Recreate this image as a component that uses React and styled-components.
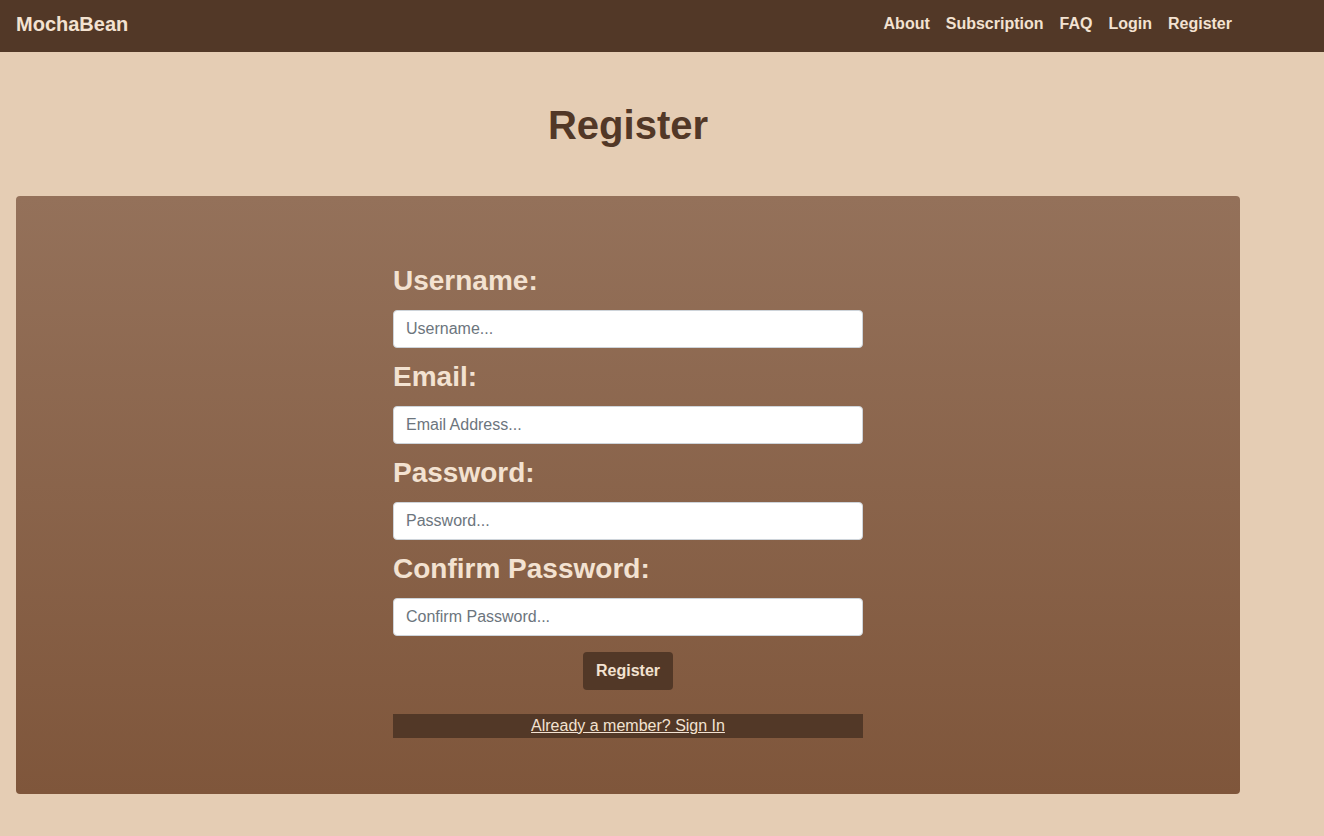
import React from "react";
import styled, { createGlobalStyle } from "styled-components";

const Global = createGlobalStyle`
  html, body { margin: 0; padding: 0; }
  body {
    background: #e5cdb4;
    font-family: "Liberation Sans", Arial, sans-serif;
    min-height: 836px;
  }
  * { box-sizing: border-box; }
`;

const Nav = styled.nav`
  height: 52px;
  background: #523827;
  display: flex;
  align-items: center;
  justify-content: space-between;
  padding: 0 92px 4px 16px;
`;

const Brand = styled.a`
  color: #f3e2d1;
  font-size: 20px;
  font-weight: 700;
  text-decoration: none;
`;

const Links = styled.div`
  display: flex;
  gap: 16px;
`;

const NavLink = styled.a`
  color: #f3e2d1;
  font-size: 16px;
  font-weight: 700;
  text-decoration: none;
`;

const Main = styled.main`
  width: 1224px;
  margin-left: 16px;
`;

const Title = styled.h1`
  margin: 50px 0 48px;
  text-align: center;
  color: #523827;
  font-size: 40px;
  line-height: 46px;
  font-weight: 700;
`;

const Panel = styled.section`
  background: linear-gradient(to bottom, #94715a, #7f563b);
  border-radius: 4px;
  padding: 56px 0;
  display: flex;
  justify-content: center;
`;

const Form = styled.form`
  width: 470px;
  display: flex;
  flex-direction: column;
`;

const Label = styled.label`
  color: #f3e2d1;
  font-size: 28px;
  font-weight: 700;
  line-height: 34px;
  margin: 12px 0 12px;
`;

const Input = styled.input`
  height: 38px;
  width: 100%;
  border: 1px solid #ced4da;
  border-radius: 4px;
  padding: 0 12px;
  font-family: "Liberation Sans", Arial, sans-serif;
  font-size: 16px;
  color: #212529;
  background: #fff;
  &::placeholder { color: #6c757d; }
`;

const Button = styled.button`
  align-self: center;
  margin-top: 16px;
  height: 38px;
  padding: 0 13px;
  border: none;
  border-radius: 4px;
  background: #523827;
  color: #f3e2d1;
  font-family: "Liberation Sans", Arial, sans-serif;
  font-size: 16px;
  font-weight: 700;
`;

const SignInBar = styled.div`
  margin-top: 24px;
  height: 24px;
  background: #523827;
  text-align: center;
  line-height: 24px;
`;

const SignInLink = styled.a`
  color: #f3e2d1;
  font-size: 16px;
  text-decoration: underline;
`;

const fields = [
  { id: "username", label: "Username:", type: "text", ph: "Username..." },
  { id: "email", label: "Email:", type: "email", ph: "Email Address..." },
  { id: "password", label: "Password:", type: "password", ph: "Password..." },
  { id: "confirm", label: "Confirm Password:", type: "password", ph: "Confirm Password..." },
];

export default function App() {
  return (
    <>
      <Global />
      <Nav>
        <Brand href="#">MochaBean</Brand>
        <Links>
          <NavLink href="#">About</NavLink>
          <NavLink href="#">Subscription</NavLink>
          <NavLink href="#">FAQ</NavLink>
          <NavLink href="#">Login</NavLink>
          <NavLink href="#">Register</NavLink>
        </Links>
      </Nav>
      <Main>
        <Title>Register</Title>
        <Panel>
          <Form onSubmit={(e) => e.preventDefault()}>
            {fields.map((f) => (
              <React.Fragment key={f.id}>
                <Label htmlFor={f.id}>{f.label}</Label>
                <Input id={f.id} type={f.type} placeholder={f.ph} />
              </React.Fragment>
            ))}
            <Button type="submit">Register</Button>
            <SignInBar>
              <SignInLink href="#">Already a member? Sign In</SignInLink>
            </SignInBar>
          </Form>
        </Panel>
      </Main>
    </>
  );
}
